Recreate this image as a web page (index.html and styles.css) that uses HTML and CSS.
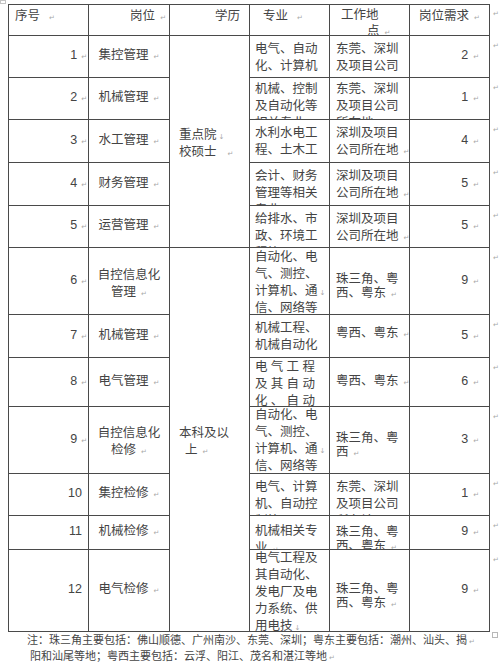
FILE: index.html
```html
<!DOCTYPE html>
<html lang="zh-CN">
<head>
<meta charset="utf-8">
<title>岗位需求表</title>
<link rel="stylesheet" href="styles.css">
</head>
<body>
<div class="sheet">
  <div class="handle"></div>
  <div class="grid">
    <div class="cell hd first h-no"><div>序号<i class="m m8">↵</i></div></div>
    <div class="cell hd h-pos"><div>岗位<i class="m">↵</i></div></div>
    <div class="cell hd h-edu"><div>学历</div></div>
    <div class="cell hd h-maj"><div>专业<i class="m m8">↵</i></div></div>
    <div class="cell hd h-loc"><div>工作地<br><span class="ind">点<i class="m">↵</i></span></div></div>
    <div class="cell hd h-qty"><div>岗位需求<i class="m">↵</i></div></div>
    <div class="end"><i class="m">↵</i></div>

    <div class="cell first num"><div>1<i class="m">↵</i></div></div>
    <div class="cell pos"><div>集控管理<i class="m">↵</i></div></div>
    <div class="cell edu span5"><div>重点院<i class="m m2">↓</i><br>校硕士<i class="m m10">↵</i></div></div>
    <div class="cell maj t5"><div>电气、自动<br>化、计算机</div></div>
    <div class="cell loc t5"><div>东莞、深圳<br>及项目公司</div></div>
    <div class="cell qty"><div>2<i class="m">↵</i></div></div>
    <div class="end"><i class="m">↵</i></div>

    <div class="cell first num"><div>2<i class="m">↵</i></div></div>
    <div class="cell pos"><div>机械管理<i class="m">↵</i></div></div>
    <div class="cell maj t4"><div>机械、控制<br>及自动化等<br>相关专业</div></div>
    <div class="cell loc t4"><div>东莞、深圳<br>及项目公司<br>所在地</div></div>
    <div class="cell qty"><div>1<i class="m">↵</i></div></div>
    <div class="end"><i class="m">↵</i></div>

    <div class="cell first num"><div>3<i class="m">↵</i></div></div>
    <div class="cell pos"><div>水工管理<i class="m">↵</i></div></div>
    <div class="cell maj t5"><div>水利水电工<br>程、土木工</div></div>
    <div class="cell loc t5"><div>深圳及项目<br>公司所在地<i class="m">↵</i></div></div>
    <div class="cell qty"><div>4<i class="m">↵</i></div></div>
    <div class="end"><i class="m">↵</i></div>

    <div class="cell first num"><div>4<i class="m">↵</i></div></div>
    <div class="cell pos"><div>财务管理<i class="m">↵</i></div></div>
    <div class="cell maj t5"><div>会计、财务<br>管理等相关<br>专业</div></div>
    <div class="cell loc t5"><div>深圳及项目<br>公司所在地<i class="m">↵</i></div></div>
    <div class="cell qty"><div>5<i class="m">↵</i></div></div>
    <div class="end"><i class="m">↵</i></div>

    <div class="cell first num"><div>5<i class="m">↵</i></div></div>
    <div class="cell pos"><div>运营管理<i class="m">↵</i></div></div>
    <div class="cell maj t5"><div>给排水、市<br>政、环境工<br>程等</div></div>
    <div class="cell loc t5"><div>深圳及项目<br>公司所在地<i class="m">↵</i></div></div>
    <div class="cell qty"><div>5<i class="m">↵</i></div></div>
    <div class="end"><i class="m">↵</i></div>

    <div class="cell first num"><div>6<i class="m">↵</i></div></div>
    <div class="cell pos sh5"><div>自控信息化<br>管理<i class="m">↵</i></div></div>
    <div class="cell edu span7"><div>本科及以<br><span class="ind6">上<i class="m">↵</i></span></div></div>
    <div class="cell maj t1"><div>自动化、电<br>气、测控、<br>计算机、通<i class="m m2">↓</i><br>信、网络等<br>相关专业</div></div>
    <div class="cell loc tight sh10"><div>珠三角、粤<br>西、粤东<i class="m">↵</i></div></div>
    <div class="cell qty"><div>9<i class="m">↵</i></div></div>
    <div class="end"><i class="m">↵</i></div>

    <div class="cell first num"><div>7<i class="m">↵</i></div></div>
    <div class="cell pos"><div>机械管理<i class="m">↵</i></div></div>
    <div class="cell maj t5"><div>机械工程、<br>机械自动化</div></div>
    <div class="cell loc up"><div>粤西、粤东<i class="m">↵</i></div></div>
    <div class="cell qty"><div>5<i class="m">↵</i></div></div>
    <div class="end"><i class="m">↵</i></div>

    <div class="cell first num"><div>8<i class="m">↵</i></div></div>
    <div class="cell pos"><div>电气管理<i class="m">↵</i></div></div>
    <div class="cell maj t1"><div><span class="js">电气工程</span><br><span class="js">及其自动</span><br><span class="js">化、自动</span><br>化等</div></div>
    <div class="cell loc"><div>粤西、粤东<i class="m">↵</i></div></div>
    <div class="cell qty"><div>6<i class="m">↵</i></div></div>
    <div class="end"><i class="m">↵</i></div>

    <div class="cell first num"><div>9<i class="m">↵</i></div></div>
    <div class="cell pos sh4"><div>自控信息化<br>检修<i class="m">↵</i></div></div>
    <div class="cell maj t0"><div>自动化、电<br>气、测控、<br>计算机、通<i class="m m2">↓</i><br>信、网络等<br>相关专业</div></div>
    <div class="cell loc tight sh10"><div>珠三角、粤<br>西<i class="m">↵</i></div></div>
    <div class="cell qty"><div>3<i class="m">↵</i></div></div>
    <div class="end"><i class="m">↵</i></div>

    <div class="cell first num n2"><div>10</div></div>
    <div class="cell pos"><div>集控检修<i class="m">↵</i></div></div>
    <div class="cell maj t5"><div>电气、计算<br>机、自动控<br>制等</div></div>
    <div class="cell loc t5"><div>东莞、深圳<br>及项目公司<br>所在地</div></div>
    <div class="cell qty"><div>1<i class="m">↵</i></div></div>
    <div class="end"><i class="m">↵</i></div>

    <div class="cell first num n2"><div>11</div></div>
    <div class="cell pos"><div>机械检修<i class="m">↵</i></div></div>
    <div class="cell maj t7"><div>机械相关专<br>业<i class="m">↵</i></div></div>
    <div class="cell loc tight t9"><div>珠三角、粤<br>西、粤东<i class="m">↵</i></div></div>
    <div class="cell qty"><div>9<i class="m">↵</i></div></div>
    <div class="end"><i class="m">↵</i></div>

    <div class="cell first num n2"><div>12</div></div>
    <div class="cell pos"><div>电气检修<i class="m">↵</i></div></div>
    <div class="cell maj t0"><div>电气工程及<br>其自动化、<br>发电厂及电<br>力系统、供<br>用电技<i class="m m2">↓</i></div></div>
    <div class="cell loc tight sh10"><div>珠三角、粤<br>西、粤东<i class="m">↵</i></div></div>
    <div class="cell qty"><div>9<i class="m">↵</i></div></div>
    <div class="end"><i class="m">↵</i></div>
  </div>
  <div class="corner"></div>
  <p class="note">注：珠三角主要包括：佛山顺德、广州南沙、东莞、深圳；粤东主要包括：潮州、汕头、揭<i class="m m2">↵</i><br><span class="ind3">阳和汕尾等地；粤西主要包括：云浮、阳江、茂名和湛江等地<i class="m m2">↵</i></span></p>
</div>
</body>
</html>
```

FILE: styles.css
```css
body {
  margin: 0;
  background: #ffffff;
  font-family: "Liberation Sans", "Noto Sans CJK SC", sans-serif;
  color: #444444;
}

.sheet {
  position: relative;
  padding: 4px 0 0 8px;
}

.handle {
  position: absolute;
  left: 0;
  top: 0;
  width: 4px;
  height: 2px;
  border: 1px solid #c4c4c4;
}

.corner {
  position: absolute;
  left: 492px;
  top: 632px;
  width: 4px;
  height: 4px;
  border: 1px solid #b8b8b8;
}

.grid {
  display: grid;
  grid-template-columns: 81px 81px 80px 80px 80px 80px 11px;
  grid-template-rows: 32px 42px 42px 43px 43px 42px 67px 43px 49px 67px 42px 34px 82px;
}

.cell {
  box-sizing: border-box;
  border-right: 1px solid #4a4a4a;
  border-bottom: 1px solid #4a4a4a;
  overflow: hidden;
  display: flex;
  flex-direction: column;
  justify-content: center;
  font-size: 12.5px;
  line-height: 17px;
  white-space: nowrap;
  padding-bottom: 2px;
}

.first { border-left: 1px solid #4a4a4a; }
.hd {
  border-top: 1px solid #4a4a4a;
  justify-content: flex-start;
  padding-top: 3px;
  padding-bottom: 0;
}

.m {
  font-style: normal;
  font-family: "DejaVu Sans", sans-serif;
  font-size: 7px;
  line-height: 1;
  color: #a8a8a8;
  margin-left: 5px;
}
.m2 { margin-left: 2px; }
.m8 { margin-left: 9px; }
.m10 { margin-left: 11px; }

/* header cells */
.h-no { align-items: flex-start; padding-left: 6px; }
.h-pos { align-items: flex-end; padding-right: 3px; }
.h-edu { align-items: flex-end; padding-right: 9px; }
.h-maj { align-items: flex-start; padding-left: 13px; }
.h-loc { align-items: flex-start; padding-left: 11px; padding-top: 2px; line-height: 16px; }
.h-qty { align-items: center; }
.ind { padding-left: 26px; }

/* body columns */
.num { align-items: flex-end; padding-right: 1px; }
.num .m { margin-left: 4px; }
.n2 { padding-right: 6px; }
.pos { align-items: center; text-align: center; }
.edu { align-items: flex-start; padding-left: 9px; padding-top: 4px; padding-bottom: 0; }
.ind6 { padding-left: 6px; }
.maj { align-items: flex-start; padding-left: 5px; }
.loc { align-items: flex-start; padding-left: 6px; }
.qty { align-items: flex-end; padding-right: 10px; }

.span5 { grid-row: span 5; }
.span7 { grid-row: span 7; }

/* vertical placement */
.t0 { justify-content: flex-start; padding-top: 0; padding-bottom: 0; }
.t1 { justify-content: flex-start; padding-top: 1px; padding-bottom: 0; }
.t4 { justify-content: flex-start; padding-top: 3px; padding-bottom: 0; }
.t5 { justify-content: flex-start; padding-top: 5px; padding-bottom: 0; }
.t7 { justify-content: flex-start; padding-top: 7px; padding-bottom: 0; }
.t9 { justify-content: flex-start; padding-top: 9px; padding-bottom: 0; }
.sh4 { padding-top: 4px; padding-bottom: 0; }
.sh5 { padding-top: 5px; padding-bottom: 0; }
.sh10 { padding-top: 10px; padding-bottom: 0; }
.up { padding-bottom: 5px; }
.tight { line-height: 14px; }

.js { letter-spacing: 3.3px; }

.end {
  padding-left: 3px;
  padding-top: 2px;
  line-height: 10px;
}
.end .m { margin-left: 0; }

.note {
  margin: 0;
  padding-left: 19px;
  font-size: 11px;
  line-height: 16px;
  white-space: nowrap;
}
.ind3 { padding-left: 3px; }
```
